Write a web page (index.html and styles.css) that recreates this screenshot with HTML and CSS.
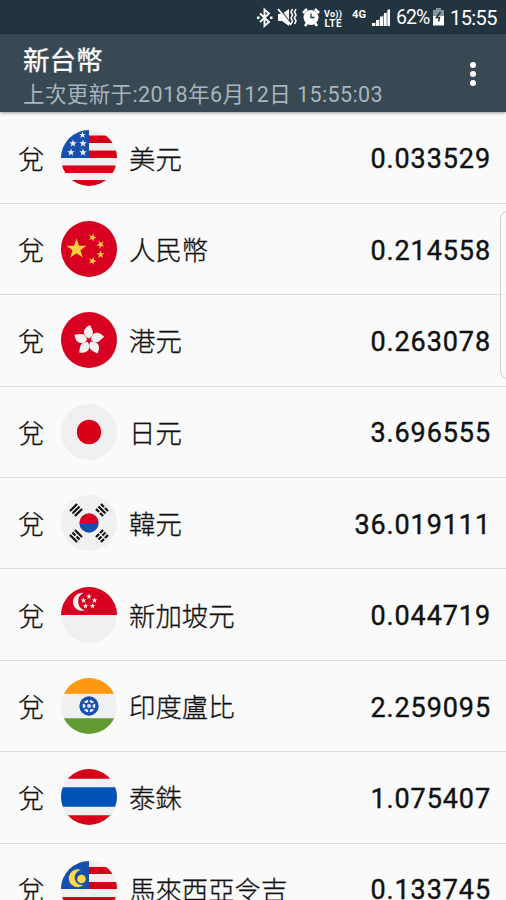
FILE: index.html
```html
<!DOCTYPE html>
<html lang="zh-Hant">
<head>
  <meta charset="UTF-8">
  <title>新台幣</title>
  <meta name="viewport" content="width=device-width, initial-scale=1.0">
  <link rel="stylesheet" href="styles.css">
</head>
<body>
  <svg class="defs" width="0" height="0">
    <defs>
      <clipPath id="round"><circle cx="28" cy="28" r="28"/></clipPath>
      <path id="star" d="M0-10 2.4-3.1 9.5-3.1 3.8 1.2 5.9 8.1 0 4-5.9 8.1-3.8 1.2-9.5-3.1-2.4-3.1Z"/>
      <path id="petal" d="M0-2C-7-5-7-12 1-15.500C3-11 7-6 0-2Z"/>
    </defs>
  </svg>

  <div class="status-bar">
    <svg class="status-icons" width="142" height="34" viewBox="0 0 142 34">
      <!-- bluetooth -->
      <path d="M5 13.500l9 8.500-4.500 4V9.500l4.500 4-9 8.500" fill="none" stroke="#fff" stroke-width="1.900"/>
      <path d="M2 16.500h2.500v2.500H2zM15 16.500h2.500v2.500H15z" fill="#fff"/>
      <!-- muted, vibrate -->
      <path d="M23 14h4l7-5v17l-7-5h-4z" fill="#fff"/>
      <path d="M24 8l12 16" stroke="#22343f" stroke-width="1.500"/>
      <path d="M23 9l13 16" stroke="#fff" stroke-width="1.800"/>
      <path d="M37.500 9l-1.500 3 1.500 3-1.500 3 1.500 3-1.500 3M41 9l-1.500 3 1.500 3-1.500 3 1.500 3-1.500 3" fill="none" stroke="#fff" stroke-width="1.600"/>
      <!-- alarm -->
      <circle cx="56" cy="17.500" r="7.500" fill="#fff"/>
      <path d="M48 13l4-4M60 9l4 4M50 26l2-3M62 26l-2-3" stroke="#fff" stroke-width="2.500"/>
      <path d="M56 13.500v4h3.500" fill="none" stroke="#22343f" stroke-width="1.300"/>
      <text class="tiny" x="69" y="16.500" textLength="18">Vo))</text>
      <text class="lte" x="69.500" y="26.500" textLength="17">LTE</text>
      <text class="net" x="97" y="18" textLength="14" lengthAdjust="spacingAndGlyphs">4G</text>
      <!-- signal -->
      <path d="M117 26v-3h3v3zM121 26v-6h3v6zM125 26v-9.500h3v9.500zM129 26v-13h2.500v13zM132.500 26V9.500h2.500V26z" fill="#fff"/>
      <path d="M117 26l17-16v16z" fill="#fff" opacity=".4"/>
    </svg>
    <span class="battery-level">62%</span>
    <svg class="battery" width="13" height="18" viewBox="0 0 13 18">
      <path d="M4 0h5v2h3v6H1V2h3z" fill="#8b969c"/>
      <path d="M1 8h11v9.500H1z" fill="#fff"/>
      <path d="M8.500 4l-4 5.500h3l-1 4" fill="none" stroke="#22343f" stroke-width="1.500"/>
    </svg>
    <span class="clock">15:55</span>
  </div>

  <header class="app-bar">
    <div>
      <h1>新台幣</h1>
      <p class="updated">上次更新于:2018年6月12日 15:55:03</p>
    </div>
    <div class="menu"><i></i><i></i><i></i></div>
  </header>

  <ul class="rates">
    <li class="rate">
      <span class="to">兌</span>
      <svg class="flag" viewBox="0 0 56 56">
        <g clip-path="url(#round)">
          <path d="M0 0h56v56H0z" fill="#f0f0f0"/>
          <path d="M28 5.500h28v7.500H28zM28 20.500h28v7.500H28zM0 35.500h56v7.500H0zM0 50h56v6H0z" fill="#d80018"/>
          <path d="M0 0h28v28H0z" fill="#164fae"/>
          <g fill="#f0f0f0">
            <use href="#star" transform="translate(21.500 5) scale(.36)"/>
            <use href="#star" transform="translate(12 13.500) scale(.4)"/>
            <use href="#star" transform="translate(22 13.500) scale(.4)"/>
            <use href="#star" transform="translate(10 22.500) scale(.4)"/>
            <use href="#star" transform="translate(22 22.500) scale(.4)"/>
          </g>
        </g>
      </svg>
      <span class="name">美元</span>
      <span class="value">0.033529</span>
    </li>
    <li class="rate">
      <span class="to">兌</span>
      <svg class="flag" viewBox="0 0 56 56">
        <circle cx="28" cy="28" r="28" fill="#d80020"/>
        <g fill="#ffd03a">
          <use href="#star" transform="translate(15.500 28) scale(1.050)"/>
          <use href="#star" transform="translate(31.500 16.500) rotate(20) scale(.42)"/>
          <use href="#star" transform="translate(39.500 23.500) rotate(45) scale(.42)"/>
          <use href="#star" transform="translate(39.500 33.500) scale(.42)"/>
          <use href="#star" transform="translate(31.500 40) rotate(20) scale(.42)"/>
        </g>
      </svg>
      <span class="name">人民幣</span>
      <span class="value">0.214558</span>
    </li>
    <li class="rate">
      <span class="to">兌</span>
      <svg class="flag" viewBox="0 0 56 56">
        <circle cx="28" cy="28" r="28" fill="#d80020"/>
        <g fill="#f5f0f0" transform="translate(28 28.500)">
          <use href="#petal"/>
          <use href="#petal" transform="rotate(72)"/>
          <use href="#petal" transform="rotate(144)"/>
          <use href="#petal" transform="rotate(216)"/>
          <use href="#petal" transform="rotate(288)"/>
        </g>
      </svg>
      <span class="name">港元</span>
      <span class="value">0.263078</span>
    </li>
    <li class="rate">
      <span class="to">兌</span>
      <svg class="flag" viewBox="0 0 56 56">
        <circle cx="28" cy="28" r="28" fill="#f0f0f0"/>
        <circle cx="28" cy="28" r="12.200" fill="#d80018"/>
      </svg>
      <span class="name">日元</span>
      <span class="value">3.696555</span>
    </li>
    <li class="rate">
      <span class="to">兌</span>
      <svg class="flag" viewBox="0 0 56 56">
        <circle cx="28" cy="28" r="28" fill="#f0f0f0"/>
        <path d="M18.300 28a9.700 9.700 0 0 1 19.400 0z" fill="#d80020"/>
        <path d="M18.300 28a9.700 9.700 0 0 0 19.400 0z" fill="#164fae"/>
        <g stroke="#111" stroke-width="2.200" fill="none">
          <path transform="translate(15 15) rotate(-45)" d="M-5-3.500H5M-5 0H5M-5 3.500H5"/>
          <path transform="translate(41 15) rotate(45)" d="M-5-3.500h4.300M.7-3.500h4.300M-5 0H5M-5 3.500h4.300M.7 3.500h4.300"/>
          <path transform="translate(15 41) rotate(45)" d="M-5-3.500H5M-5 0h4.300M.7 0h4.300M-5 3.500H5"/>
          <path transform="translate(41 41) rotate(-45)" d="M-5-3.500h4.300M.7-3.500h4.300M-5 0h4.300M.7 0h4.300M-5 3.500h4.300M.7 3.500h4.300"/>
        </g>
      </svg>
      <span class="name">韓元</span>
      <span class="value">36.019111</span>
    </li>
    <li class="rate">
      <span class="to">兌</span>
      <svg class="flag" viewBox="0 0 56 56">
        <g clip-path="url(#round)">
          <path d="M0 0h56v56H0z" fill="#f0f0f0"/>
          <path d="M0 0h56v28H0z" fill="#d80020"/>
          <path d="M22.500 6a9 9 0 1 0 1 17.500a9.500 9.500 0 0 1-1-17.500z" fill="#f0f0f0"/>
          <g fill="#f0f0f0">
            <use href="#star" transform="translate(28 9.500) scale(.3)"/>
            <use href="#star" transform="translate(22.500 13.500) scale(.3)"/>
            <use href="#star" transform="translate(33.500 13.500) scale(.3)"/>
            <use href="#star" transform="translate(24.500 19) scale(.3)"/>
            <use href="#star" transform="translate(31.500 19) scale(.3)"/>
          </g>
        </g>
      </svg>
      <span class="name">新加坡元</span>
      <span class="value">0.044719</span>
    </li>
    <li class="rate">
      <span class="to">兌</span>
      <svg class="flag" viewBox="0 0 56 56">
        <g clip-path="url(#round)">
          <path d="M0 0h56v56H0z" fill="#f0f0f0"/>
          <path d="M0 0h56v15.800H0z" fill="#ff9811"/>
          <path d="M0 40.200h56V56H0z" fill="#5f9b32"/>
          <circle cx="28" cy="28" r="9.700" fill="#164fae"/>
          <circle cx="28" cy="28" r="6.300" fill="#f0f0f0"/>
          <circle cx="28" cy="28" r="3.700" fill="#164fae"/>
          <path d="M28 21v14M22 24.500l12 7M34 24.500l-12 7" stroke="#164fae" stroke-width="1.700"/>
          <circle cx="28" cy="28" r="2" fill="#d5dcec"/>
        </g>
      </svg>
      <span class="name">印度盧比</span>
      <span class="value">2.259095</span>
    </li>
    <li class="rate">
      <span class="to">兌</span>
      <svg class="flag" viewBox="0 0 56 56">
        <g clip-path="url(#round)">
          <path d="M0 0h56v56H0z" fill="#f0f0f0"/>
          <path d="M0 0h56v9.800H0zM0 46.200h56V56H0z" fill="#d80018"/>
          <path d="M0 18.300h56v19.400H0z" fill="#0052b4"/>
        </g>
      </svg>
      <span class="name">泰銖</span>
      <span class="value">1.075407</span>
    </li>
    <li class="rate">
      <span class="to">兌</span>
      <svg class="flag" viewBox="0 0 56 56">
        <g clip-path="url(#round)">
          <path d="M0 0h56v56H0z" fill="#f0f0f0"/>
          <path d="M28 6h28v7H28zM28 21h28v7H28zM0 36h56v7H0zM0 50h56v6H0z" fill="#d80018"/>
          <path d="M0 0h28v28H0z" fill="#164fae"/>
          <path d="M20 9a8.900 8.900 0 1 0 2.500 15a7.200 7.200 0 1 1-2.500-15z" fill="#ffda44"/>
          <circle cx="20.500" cy="18" r="4.300" fill="#ffda44"/>
        </g>
      </svg>
      <span class="name">馬來西亞令吉</span>
      <span class="value">0.133745</span>
    </li>
  </ul>

  <div class="edge-handle"></div>
</body>
</html>
```

FILE: styles.css
```css
* {
  box-sizing: border-box;
}
body {
  margin: 0;
  height: 900px;
  overflow: hidden;
  position: relative;
  background: #fafafa;
  color: #111;
  font-family: Roboto, "Noto Sans CJK TC", sans-serif;
}
.defs {
  position: absolute;
}
.status-bar {
  display: flex;
  align-items: center;
  height: 34px;
  padding-left: 255px;
  background: #22343f;
  color: #fff;
  font-size: 20px;
  line-height: 34px;
}
.status-icons {
  flex: none;
}
.status-icons text {
  fill: #fff;
  font-weight: 700;
}
.tiny {
  font-size: 9px;
}
.lte {
  font-size: 10px;
}
.net {
  font-size: 10px;
}
.battery-level {
  width: 35px;
  margin-left: -1px;
  font-size: 19.500px;
  letter-spacing: -1px;
  padding-top: 2px;
  white-space: nowrap;
}
.battery {
  flex: none;
  margin-left: 1px;
}
.clock {
  margin-left: 5px;
  padding-top: 2px;
  letter-spacing: -0.6px;
}
.app-bar {
  display: flex;
  justify-content: space-between;
  height: 78px;
  padding: 10px 30px 0 23px;
  background: #384954;
  box-shadow: 0 1px 3px rgba(0, 0, 0, 0.4);
  position: relative;
}
.app-bar h1 {
  margin: 0;
  color: #fff;
  font-size: 26.500px;
  font-weight: 400;
  line-height: 34px;
  -webkit-text-stroke: 0.3px #fff;
}
.updated {
  margin: 3px 0 0;
  color: #a9b4bb;
  font-size: 21.500px;
  line-height: 28px;
  letter-spacing: 0.400px;
  white-space: nowrap;
}
.menu {
  display: flex;
  flex-direction: column;
  gap: 3px;
  padding-top: 18px;
}
.menu i {
  width: 6px;
  height: 6px;
  border-radius: 50%;
  background: #fff;
}
.rates {
  list-style: none;
  margin: 0;
  padding: 0.5px 0 0;
}
.rate {
  display: flex;
  align-items: center;
  height: 91.400px;
  padding: 0 15px 0 18px;
  border-bottom: 1.500px solid #dcdcdc;
  font-size: 26.400px;
  line-height: 36px;
}
.to {
  width: 43px;
  padding-top: 4px;
  font-weight: 300;
  -webkit-text-stroke: 0.3px #111;
}
.flag {
  flex: none;
  width: 56px;
  height: 56px;
}
.name {
  margin-left: 12px;
  padding-top: 4px;
  font-weight: 300;
  -webkit-text-stroke: 0.3px #111;
}
.value {
  margin-left: auto;
  padding-top: 3px;
  font-size: 27px;
  font-weight: 400;
  letter-spacing: 0.9px;
  -webkit-text-stroke: 0.4px #111;
}
.edge-handle {
  position: absolute;
  top: 211px;
  left: 500px;
  width: 16px;
  height: 168px;
  border: 1.500px solid #cfcfcf;
  border-radius: 9px;
  background: rgba(250, 250, 250, 0.7);
}
```
